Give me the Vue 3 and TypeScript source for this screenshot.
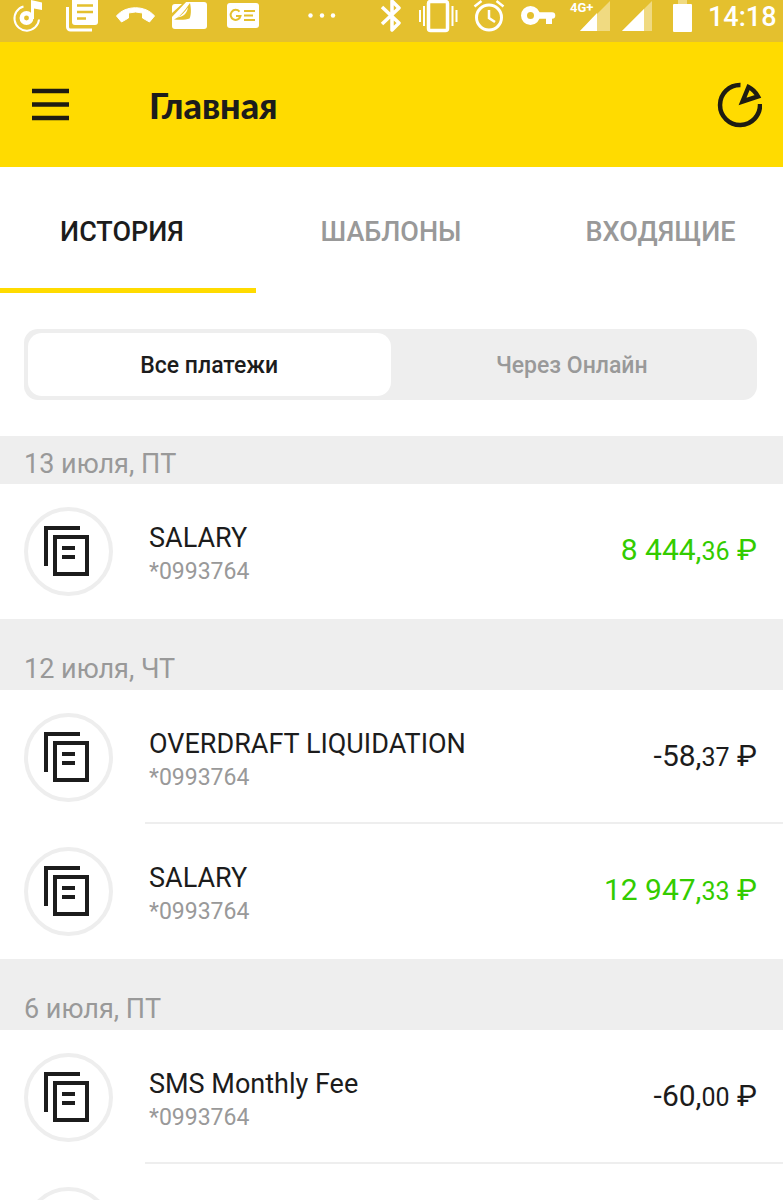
<script setup lang="ts">
import { ref } from 'vue'

interface Payment {
  title: string
  account: string
  whole: string
  cents: string
  income?: boolean
}

interface Day {
  date: string
  payments: Payment[]
}

const tabs = ['ИСТОРИЯ', 'ШАБЛОНЫ', 'ВХОДЯЩИЕ']
const activeTab = ref(0)
const filters = ['Все платежи', 'Через Онлайн']
const activeFilter = ref(0)

const days: Day[] = [
  {
    date: '13 июля, ПТ',
    payments: [{ title: 'SALARY', account: '*0993764', whole: '8 444', cents: '36', income: true }],
  },
  {
    date: '12 июля, ЧТ',
    payments: [
      { title: 'OVERDRAFT LIQUIDATION', account: '*0993764', whole: '-58', cents: '37' },
      { title: 'SALARY', account: '*0993764', whole: '12 947', cents: '33', income: true },
    ],
  },
  {
    date: '6 июля, ПТ',
    payments: [
      { title: 'SMS Monthly Fee', account: '*0993764', whole: '-60', cents: '00' },
      { title: '', account: '', whole: '', cents: '' },
    ],
  },
]
</script>

<template>
  <div class="screen">
    <div class="status">
      <div class="notices">
        <svg width="54" height="42" viewBox="1 0 54 42" aria-hidden="true">
          <path d="M23.500 6.500A12.300 12.300 0 1 0 39 19.500" fill="none" stroke="#fff" stroke-width="2" />
          <circle cx="26.500" cy="18" r="4.700" fill="none" stroke="#fff" stroke-width="4.500" />
          <path d="M31 19V0l11 2.500V10l-8-1.500V19z" fill="#fff" />
        </svg>
        <svg width="54" height="42" viewBox="55 0 54 42" aria-hidden="true">
          <path d="M67.500 7v20a3 3 0 0 0 3 3H92" fill="none" stroke="#fff" stroke-width="3" />
          <rect x="72" y="-3" width="26" height="28" rx="3" fill="#fff" />
          <path d="M77 5.500h16M77 12h16M77 18.500h9" stroke="#e4c02e" stroke-width="2.500" />
        </svg>
        <svg width="54" height="42" viewBox="109 0 54 42" aria-hidden="true">
          <path d="M116.500 16c9-11 29-11 38 0l-5 6-7-4v-5q-7-2-14 0v5l-7 4z" fill="#fff" stroke="#fff" stroke-linejoin="round" />
        </svg>
        <svg width="54" height="42" viewBox="163 0 54 42" aria-hidden="true">
          <rect x="172" y="2" width="35" height="27" rx="3" fill="#fff" />
          <path d="M170 0h18L171 18z" fill="#e4c02e" />
          <path d="M172 13V7q0-3 3-3h7z" fill="#fff" />
          <path d="M174 19.500c5-2 10-8 16-16.500 1.500 7 1 13-.5 15.500-3 1.500-10 1.500-15.500 1z" fill="#e4c02e" />
          <path d="M177 17.500c5-2 8-6 11-10-1 5-3 9-11 10z" fill="#fff" />
        </svg>
        <svg width="54" height="42" viewBox="217 0 54 42" aria-hidden="true">
          <rect x="227" y="3" width="32" height="25" rx="3" fill="#fff" />
          <path d="M239.500 11.700a5 5 0 1 0 1 4.300h-4.500M244 11h11M244 15.500h9M244 20h11" fill="none" stroke="#e4c02e" stroke-width="2" />
        </svg>
        <svg class="more" width="102" height="42" viewBox="271 0 102 42" aria-hidden="true">
          <g fill="#fff"><circle cx="310.500" cy="15.500" r="2.200" /><circle cx="322" cy="15.500" r="2.200" /><circle cx="333" cy="15.500" r="2.200" /></g>
        </svg>
      </div>
      <div class="system">
        <svg width="49" height="42" viewBox="365 0 49 42" aria-hidden="true">
          <path d="M382 7l17 16-7 7V1l7 7-17 16" fill="none" stroke="#fff" stroke-width="3.500" stroke-linejoin="round" />
        </svg>
        <svg width="49" height="42" viewBox="414 0 49 42" aria-hidden="true">
          <rect x="428.500" y="1.500" width="19" height="29" rx="2" fill="none" stroke="#fff" stroke-width="3.500" />
          <path d="M424 6v20M420 10v12M452.500 6v20M456.500 10v12" stroke="#fff" stroke-width="2" />
        </svg>
        <svg width="49" height="42" viewBox="463 0 49 42" aria-hidden="true">
          <circle cx="489" cy="17.500" r="12.500" fill="none" stroke="#fff" stroke-width="3" />
          <path d="M489 10v8l6 4M474.500 6.500l7-5.500M496.500 1l7 5.500" fill="none" stroke="#fff" stroke-width="2.500" />
        </svg>
        <svg width="49" height="42" viewBox="512 0 49 42" aria-hidden="true">
          <circle cx="530.500" cy="15.500" r="6.500" fill="none" stroke="#fff" stroke-width="6" />
          <path d="M538 15.500h14" stroke="#fff" stroke-width="6.500" stroke-linecap="round" />
          <path d="M549 16v8" stroke="#fff" stroke-width="6" />
        </svg>
        <svg width="49" height="42" viewBox="561 0 49 42" aria-hidden="true">
          <path d="M580 31 610 1v30z" fill="#f0da81" />
          <path d="M580 31 597 13v18z" fill="#fff" />
          <path d="M569 0h26v9h-14v4h-12z" fill="#e4c02e" />
          <text x="570" y="12" class="network">4G+</text>
        </svg>
        <svg width="49" height="42" viewBox="610 0 49 42" aria-hidden="true">
          <path d="M622 31 652 1v30z" fill="#f0da81" />
          <path d="M622 31 644 9v22z" fill="#fff" />
        </svg>
        <svg width="49" height="42" viewBox="659 0 49 42" aria-hidden="true">
          <path d="M678 0h9v4h-9z" fill="#f0da81" />
          <rect x="673" y="4" width="19" height="28" rx="1" fill="#fff" />
        </svg>
        <time class="clock">14:18</time>
      </div>
    </div>

    <header class="appbar">
      <button class="icon-button" type="button" aria-label="Меню">
        <svg width="37" height="33" viewBox="0 0 37 33">
          <path d="M0 3h37M0 16.500h37M0 30h37" stroke="#1e1c12" stroke-width="4.500" />
        </svg>
      </button>
      <h1 class="title">Главная</h1>
      <button class="icon-button" type="button" aria-label="Аналитика">
        <svg width="46" height="48" viewBox="716 81 46 48" fill="none" stroke="#1e1c12" stroke-width="4.500">
          <path d="M740.500 85A20 20 0 1 0 760 104" />
          <path d="M748.500 87 742.500 101.500 758 96.500Q754.500 90 748.500 87z" />
        </svg>
      </button>
    </header>

    <nav class="tabs" role="tablist">
      <button
        v-for="(tab, i) in tabs"
        :key="tab"
        type="button"
        role="tab"
        class="tab"
        :class="{ active: i === activeTab }"
        :aria-selected="i === activeTab"
        @click="activeTab = i"
      >{{ tab }}</button>
    </nav>

    <div class="segments">
      <button
        v-for="(filter, i) in filters"
        :key="filter"
        type="button"
        class="segment"
        :class="{ active: i === activeFilter }"
        :aria-pressed="i === activeFilter"
        @click="activeFilter = i"
      >{{ filter }}</button>
    </div>

    <main class="history">
      <section v-for="day in days" :key="day.date" class="day">
        <h2 class="date">{{ day.date }}</h2>
        <ul class="payments">
          <li v-for="(payment, i) in day.payments" :key="i" class="payment">
            <span class="badge">
              <svg width="46" height="50" viewBox="0 0 46 50" fill="none" stroke="#1c1c1c" stroke-width="4" aria-hidden="true">
                <path d="M2 40V2h34M11 11h32v37H11zM18 22h13M18 31h13" />
              </svg>
            </span>
            <div class="body">
              <div class="about">
                <span class="name">{{ payment.title }}</span>
                <span class="account">{{ payment.account }}</span>
              </div>
              <span v-if="payment.whole" class="amount" :class="{ income: payment.income }">{{ payment.whole }},<span class="cents">{{ payment.cents }}</span> ₽</span>
            </div>
          </li>
        </ul>
      </section>
    </main>
  </div>
</template>

<style>
body {
  margin: 0;
}
</style>

<style scoped>
.screen {
  display: flex;
  flex-direction: column;
  height: 100vh;
  overflow: hidden;
  background: #fff;
  color: #1c1c1c;
  font-family: Roboto, 'Noto Sans', sans-serif;
}

button {
  margin: 0;
  padding: 0;
  border: 0;
  background: none;
  color: inherit;
  font: inherit;
  cursor: pointer;
}

svg {
  display: block;
  flex: none;
}

.status {
  display: flex;
  flex: none;
  justify-content: space-between;
  height: 42px;
  padding: 0 8px 0 1px;
  overflow: hidden;
  background: #e4c02e;
}

.notices,
.system {
  display: flex;
}

.more {
  margin-right: -8px;
}

.network {
  fill: #fff;
  font-size: 13px;
  font-weight: 700;
}

.clock {
  color: #fff;
  font-size: 27px;
  font-weight: 500;
  line-height: 34px;
}

.appbar {
  display: flex;
  flex: none;
  align-items: center;
  height: 125px;
  padding: 0 21px 0 32px;
  box-sizing: border-box;
  background: #ffdb00;
}

.title {
  flex: 1;
  margin: 0 0 0 80px;
  font-family: Lato, 'Open Sans', sans-serif;
  font-size: 36px;
  font-weight: 900;
  line-height: 40px;
}

.tabs {
  display: grid;
  flex: none;
  grid-template-columns: 244fr 294fr 245fr;
  height: 126px;
}

.tab {
  position: relative;
  padding-top: 3px;
  color: #999;
  font-size: 27px;
  font-weight: 500;
}

.tab.active {
  color: #1c1c1c;
}

.tab.active::after {
  content: '';
  position: absolute;
  bottom: 0;
  left: 0;
  width: calc(100% + 12px);
  height: 5px;
  background: #ffdb00;
}

.segments {
  display: grid;
  flex: none;
  grid-template-columns: 1fr 1fr;
  height: 71px;
  margin: 36px 26px 36px 24px;
  padding: 4px;
  box-sizing: border-box;
  border-radius: 14px;
  background: #eee;
}

.segment {
  padding-top: 2px;
  border-radius: 14px;
  color: #999;
  font-size: 23px;
  font-weight: 500;
}

.segment.active {
  background: #fff;
  color: #1c1c1c;
}

.history {
  flex: 1;
  min-height: 0;
  overflow-y: auto;
  scrollbar-width: none;
}

.date {
  margin: 0;
  padding: 34px 24px 5px;
  background: #eee;
  color: #999;
  font-size: 27px;
  font-weight: 400;
  line-height: 32px;
}

.day:first-child .date {
  padding: 12px 24px 4px;
}

.payments {
  margin: 0;
  padding: 0 0 1px;
  list-style: none;
}

.payment {
  display: flex;
  align-items: center;
  height: 134px;
  padding-left: 24px;
}

.badge {
  display: flex;
  flex: none;
  align-items: center;
  justify-content: center;
  width: 89px;
  height: 89px;
  padding-right: 4px;
  box-sizing: border-box;
  border: 4px solid #eee;
  border-radius: 50%;
}

.body {
  display: flex;
  flex: 1;
  align-items: center;
  justify-content: space-between;
  height: 100%;
  margin-left: 32px;
  padding: 2px 26px 0 4px;
  box-sizing: border-box;
  border-bottom: 2px solid transparent;
}

.payment:not(:last-child) .body {
  border-bottom-color: #eee;
}

.about {
  display: flex;
  flex-direction: column;
  padding-top: 7px;
}

.name {
  font-size: 27px;
  line-height: 34px;
}

.account {
  color: #999;
  font-size: 23px;
  line-height: 34px;
}

.amount {
  font-size: 30px;
  line-height: 40px;
  white-space: nowrap;
}

.cents {
  font-size: 25px;
}

.income {
  color: #3c0;
}
</style>
